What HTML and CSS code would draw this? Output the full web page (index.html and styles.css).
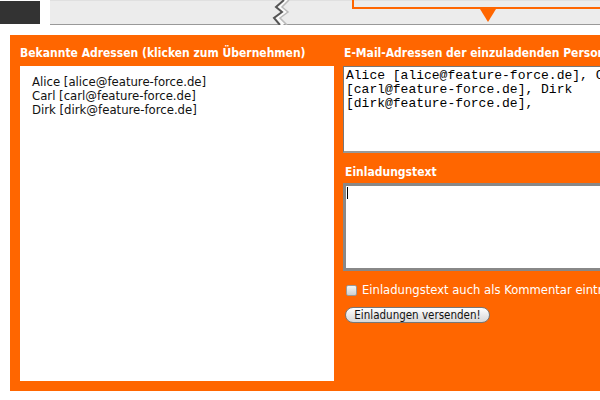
FILE: index.html
```html
<!DOCTYPE html>
<html lang="de">
<head>
<meta charset="utf-8">
<title>Einladungen</title>
<link rel="stylesheet" href="styles.css">
</head>
<body>
<div class="topbar">
  <div class="dark"></div>
  <div class="tabs">
    <svg class="zigzag" width="24" height="25" viewBox="0 0 24 25">
      <polyline points="15,0 6,7 12,12 4,18 11,25" fill="none" stroke="#fafafa" stroke-width="4"/>
      <polyline points="12,0 4,7 10,12 2,18 8,25" fill="none" stroke="#555" stroke-width="2"/>
      <polyline points="17,0 10,7 16,12 8,18 15,25" fill="none" stroke="#bbb" stroke-width="1.5"/>
    </svg>
    <div class="selected">
      <span class="pointer"></span>
    </div>
  </div>
</div>
<div class="panel">
  <div class="col col-left">
    <h2 class="heading">Bekannte Adressen (klicken zum Übernehmen)</h2>
    <div class="known">
      <div class="addr">Alice [alice@feature-force.de]</div>
      <div class="addr">Carl [carl@feature-force.de]</div>
      <div class="addr">Dirk [dirk@feature-force.de]</div>
    </div>
  </div>
  <div class="col col-right">
    <h2 class="heading">E-Mail-Adressen der einzuladenden Personen</h2>
    <textarea class="field field-emails">Alice [alice@feature-force.de], Carl [carl@feature-force.de], Dirk [dirk@feature-force.de], </textarea>
    <h2 class="heading heading-gap">Einladungstext</h2>
    <div class="field field-text"><span class="caret"></span></div>
    <label class="check">
      <span class="box"></span>
      <span>Einladungstext auch als Kommentar eintragen</span>
    </label>
    <div class="actions">
      <button class="send" type="button">Einladungen versenden!</button>
    </div>
  </div>
</div>
</body>
</html>
```
FILE: styles.css
```css
html, body {
  margin: 0;
  padding: 0;
  overflow: hidden;
  width: 600px;
  height: 400px;
  background: #fff;
}
body {
  font-family: "DejaVu Sans Condensed", "DejaVu Sans", sans-serif;
}
.topbar {
  display: flex;
  gap: 10px;
  height: 25px;
}
.dark {
  width: 40px;
  height: 23px;
  margin-top: 1px;
  background: #333;
}
.tabs {
  flex: 1;
  display: flex;
  align-items: flex-start;
  background: #ececec;
  border-top: 1px solid #e0e0e0;
  border-bottom: 1px solid #999;
  height: 23px;
  padding-left: 222px;
}
.zigzag {
  display: block;
  margin-top: -1px;
  flex: none;
}
.selected {
  position: relative;
  margin-left: 56px;
  flex: 1;
  height: 7px;
  margin-top: -1px;
  border-left: 2px solid #ff6600;
  border-bottom: 2px solid #ff6600;
}
.pointer {
  position: absolute;
  left: 126px;
  top: 9px;
  width: 0;
  height: 0;
  border-left: 8px solid transparent;
  border-right: 8px solid transparent;
  border-top: 13px solid #ff6600;
}
.panel {
  display: flex;
  gap: 10px;
  margin: 10px 0 0 10px;
  width: 900px;
  height: 336px;
  padding: 10px 0 10px 10px;
  background: #ff6600;
}
.col-left {
  width: 314px;
  display: flex;
  flex-direction: column;
}
.col-right {
  width: 420px;
  display: flex;
  flex-direction: column;
  align-items: flex-start;
}
.heading {
  margin: 0 0 5px;
  color: #fff;
  font-size: 12px;
  font-weight: bold;
  line-height: 16px;
}
.heading-gap {
  margin-top: 11px;
  margin-left: 1px;
  margin-bottom: 3px;
}
.known {
  flex: 1;
  background: #fff;
  padding: 9px 12px 5px;
  font-size: 13px;
  line-height: 14px;
  color: #111;
}
.field {
  box-sizing: border-box;
  background: #fff;
  margin: 0;
}
.field-emails {
  display: block;
  width: 312px;
  height: 87px;
  margin-left: -1px;
  border: 1px solid #777;
  border-right-color: #bbb;
  border-bottom: 2px solid #999;
  padding: 2px 2px;
  font-family: "Liberation Mono", monospace;
  font-size: 13px;
  line-height: 14px;
  color: #000;
  resize: none;
  outline: none;
  overflow: hidden;
}
.field-text {
  width: 362px;
  height: 88px;
  margin-left: -1px;
  border: 3px solid #888;
  padding: 1px 1px;
}
.caret {
  display: block;
  width: 1px;
  height: 12px;
  background: #000;
}
.check {
  display: flex;
  align-items: center;
  gap: 5px;
  margin-top: 11px;
  margin-left: 2px;
  color: #fff;
  font-size: 12.9px;
  line-height: 16px;
  white-space: nowrap;
}
.box {
  width: 9px;
  height: 9px;
  border: 1px solid #999;
  border-radius: 2px;
  background: linear-gradient(#f4f4f4, #cfcfcf);
}
.actions {
  margin-top: 9px;
  margin-left: 1px;
}
.send {
  display: block;
  height: 16px;
  width: 145px;
  padding: 0;
  border: 1px solid #777;
  border-radius: 8px;
  background: linear-gradient(#ffffff, #e6e6e6 60%, #d8d8d8);
  font-family: "DejaVu Sans Condensed", "DejaVu Sans", sans-serif;
  font-size: 11.5px;
  line-height: 14px;
  color: #111;
}
```
